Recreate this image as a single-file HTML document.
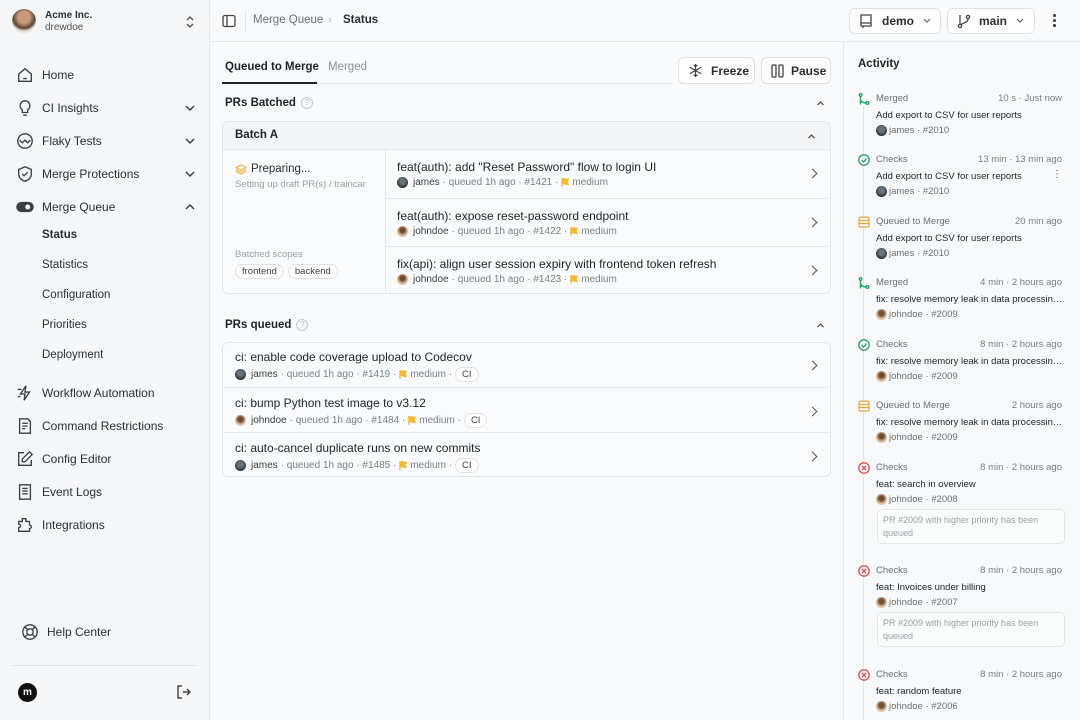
<!DOCTYPE html>
<html><head><meta charset="utf-8"><style>
*{box-sizing:border-box;margin:0;padding:0}
body{width:1080px;height:720px;overflow:hidden;font-family:"Liberation Sans",sans-serif;background:#f9fafb;color:#1f2328;position:relative;font-size:12px}
.abs{position:absolute}
.sb{left:0;top:0;width:210px;height:720px;background:#f6f7f8;border-right:1px solid #e6e8eb}
.nav{position:absolute;left:16px;display:flex;align-items:center;font-size:12px;color:#2b2f33;width:180px}
.nav svg{width:18px;height:18px;margin-right:8px;stroke:#3a3f44;fill:none;stroke-width:1.5}
.nav .ch{position:absolute;right:0;width:12px;height:12px;margin:0}
.sub{position:absolute;left:42px;font-size:11.5px;color:#2b2f33}
.hdr{left:210px;top:0;width:870px;height:42px;border-bottom:1px solid #e6e8eb}
.btn{position:absolute;border:1px solid #dfe2e5;border-radius:6px;background:#fff;display:flex;align-items:center;font-size:12px;font-weight:bold;color:#2b2f33}
.card{position:absolute;background:#fafbfc;border:1px solid #e3e6e9;border-radius:6px;overflow:hidden}
.t{font-size:12px;color:#1f2328}
.m{font-size:10px;color:#7a8087;display:flex;align-items:center;gap:3px;white-space:nowrap}
.m b{color:#3a3f44;font-weight:normal}
.av{width:11px;height:11px;border-radius:50%;display:inline-block;margin-right:2px}
.aj{background:radial-gradient(circle at 50% 40%,#6a737c 30%,#2b3238 70%)}
.ad{background:radial-gradient(circle at 50% 40%,#6b4a2e 25%,#e2c4a6 60%)}
.fl{width:8px;height:9px;display:inline-block;background:#f5b82e;clip-path:polygon(0 0,100% 10%,80% 45%,100% 80%,15% 70%,15% 100%,0 100%)}
.tag{border:1px solid #dfe2e5;border-radius:9px;padding:1px 6px;font-size:9.5px;color:#3a3f44;background:#fff}
.row{position:absolute;left:0;right:0;border-top:1px solid #e6e8eb}
.arr{position:absolute;right:14px;width:7px;height:7px;border-right:1.5px solid #555;border-top:1.5px solid #555;transform:rotate(45deg)}
.act{position:absolute;left:858px;width:208px}
.act .ic{position:absolute;left:0;top:0;width:12px;height:12px}
.act .k{position:absolute;left:18px;top:0;font-size:9.5px;color:#6b7178}
.act .tm{position:absolute;right:4px;top:0;font-size:9.5px;color:#7a8087}
.act .ti{position:absolute;left:18px;top:17px;font-size:9.5px;color:#1f2328;white-space:nowrap;width:190px;overflow:hidden;text-overflow:ellipsis}
.act .u{position:absolute;left:18px;top:32px;font-size:9.5px;color:#6b7178;display:flex;align-items:center}
.act .note{position:absolute;left:19px;top:47px;width:188px;height:35px;border:1px solid #e3e6e9;border-radius:5px;font-size:9px;color:#9aa0a6;padding:4px 5px;line-height:13px;background:#fbfcfc}
.q{display:inline-block;width:12px;height:12px;border:1px solid #c3c7cb;border-radius:50%;font-size:8px;color:#b0b5ba;text-align:center;line-height:10px;font-weight:normal;margin-left:5px;vertical-align:1px}
</style></head><body>
<div class="abs sb"></div>
<div class="abs" style="left:12px;top:9px;width:24px;height:24px;border-radius:50%;background:radial-gradient(circle at 50% 35%,#c99b7c 30%,#5a4334 55%,#e9e4df 70%)"></div>
<div class="abs" style="left:45px;top:10px;font-size:10px;font-weight:bold;color:#2b2f33">Acme Inc.</div>
<div class="abs" style="left:45px;top:22px;font-size:10px;color:#555">drewdoe</div>
<svg class="abs" style="left:184px;top:14px" width="12" height="16" viewBox="0 0 12 16" fill="none" stroke="#555" stroke-width="1.4"><path d="M3 6l3-3 3 3M3 10l3 3 3-3"/></svg>

<div class="nav" style="top:66px"><svg viewBox="0 0 20 20"><path d="M3 9l7-6 7 6v8H3z M8 14h4"/></svg>Home</div>
<div class="nav" style="top:99px"><svg viewBox="0 0 20 20"><path d="M10 2a5.5 5.5 0 0 0-3 10v3h6v-3a5.5 5.5 0 0 0-3-10zM8 18h4"/></svg>CI Insights<svg class="ch" viewBox="0 0 12 12"><path d="M2 4l4 4 4-4"/></svg></div>
<div class="nav" style="top:132px"><svg viewBox="0 0 20 20"><circle cx="10" cy="10" r="8"/><path d="M4 9l3 3 3-3 3 3 3-3"/></svg>Flaky Tests<svg class="ch" viewBox="0 0 12 12"><path d="M2 4l4 4 4-4"/></svg></div>
<div class="nav" style="top:165px"><svg viewBox="0 0 20 20"><path d="M10 2l7 3v5c0 4-3 7-7 8-4-1-7-4-7-8V5z M7 10l2 2 4-4"/></svg>Merge Protections<svg class="ch" viewBox="0 0 12 12"><path d="M2 4l4 4 4-4"/></svg></div>
<div class="nav" style="top:198px"><svg viewBox="0 0 20 20"><rect x="1" y="5" width="18" height="10" rx="5" fill="#3a3f44"/><circle cx="13" cy="10" r="3.5" fill="#fff"/></svg>Merge Queue<svg class="ch" viewBox="0 0 12 12"><path d="M2 8l4-4 4 4"/></svg></div>
<div class="sub" style="top:229px;font-weight:bold">Status</div>
<div class="sub" style="top:259px">Statistics</div>
<div class="sub" style="top:289px">Configuration</div>
<div class="sub" style="top:319px">Priorities</div>
<div class="sub" style="top:349px">Deployment</div>
<div class="nav" style="top:384px"><svg viewBox="0 0 20 20"><path d="M11 2L5 11h5l-1 7 6-9h-5z M2 6h4 M2 14h3"/></svg>Workflow Automation</div>
<div class="nav" style="top:417px"><svg viewBox="0 0 20 20"><path d="M4 2h9l3 3v13H4z M7 7h6M7 10h6M7 13h3"/></svg>Command Restrictions</div>
<div class="nav" style="top:450px"><svg viewBox="0 0 20 20"><path d="M9 3H3v14h14v-6 M15 2l3 3-8 8H7v-3z"/></svg>Config Editor</div>
<div class="nav" style="top:483px"><svg viewBox="0 0 20 20"><path d="M4 2h12v16H4z M7 6h6M7 9h6M7 12h6"/></svg>Event Logs</div>
<div class="nav" style="top:516px"><svg viewBox="0 0 20 20"><path d="M7 3h4v3a2 2 0 1 1 0 0h4v4a2 2 0 1 1 0 4v3H3v-4a2 2 0 1 0 0-4V6h4z"/></svg>Integrations</div>
<div class="nav" style="top:623px;left:21px"><svg viewBox="0 0 20 20"><circle cx="10" cy="10" r="8"/><circle cx="10" cy="10" r="3.5"/><path d="M4 4l3.5 3.5M16 4l-3.5 3.5M4 16l3.5-3.5M16 16l-3.5-3.5"/></svg>Help Center</div>
<div class="abs" style="left:12px;top:665px;width:186px;border-top:1px solid #e3e6e9"></div>
<div class="abs" style="left:18px;top:683px;width:19px;height:19px;border-radius:50%;background:#111;color:#fff;font-size:10px;font-weight:bold;text-align:center;line-height:19px">m</div>
<svg class="abs" style="left:177px;top:685px" width="14" height="14" viewBox="0 0 14 14" fill="none" stroke="#444" stroke-width="1.4"><path d="M5 1H1v12h4 M6 7h7 M10 4l3 3-3 3"/></svg>

<div class="abs hdr"></div>
<svg class="abs" style="left:222px;top:14px" width="14" height="14" viewBox="0 0 14 14" fill="none" stroke="#444" stroke-width="1.3"><rect x="1" y="1.5" width="12" height="11" rx="2"/><path d="M5 1.5v11"/></svg>
<div class="abs" style="left:245px;top:10px;height:22px;border-left:1px solid #e3e6e9"></div>
<div class="abs" style="left:253px;top:14px;font-size:11.5px;color:#6b7178">Merge Queue</div>
<div class="abs" style="left:328px;top:14px;font-size:11px;color:#b0b5ba">›</div>
<div class="abs" style="left:343px;top:14px;font-size:11.5px;font-weight:bold;color:#2b2f33">Status</div>
<div class="btn" style="left:849px;top:8px;width:92px;height:26px;padding-left:9px"><svg width="14" height="15" viewBox="0 0 14 15" fill="none" stroke="#444" stroke-width="1.3"><path d="M2 1h10v11H2z M2 9h10 M4 12v2"/></svg><span style="margin-left:9px">demo</span><svg style="margin-left:8px" width="10" height="8" viewBox="0 0 10 8" fill="none" stroke="#666" stroke-width="1.2"><path d="M2 2l3 3 3-3"/></svg></div>
<div class="btn" style="left:947px;top:8px;width:88px;height:26px;padding-left:9px"><svg width="14" height="15" viewBox="0 0 14 15" fill="none" stroke="#444" stroke-width="1.3"><circle cx="3" cy="12" r="1.6"/><circle cx="11" cy="3" r="1.6"/><path d="M3 1v9 M11 5c0 4-5 3-7 6"/></svg><span style="margin-left:8px">main</span><svg style="margin-left:8px" width="10" height="8" viewBox="0 0 10 8" fill="none" stroke="#666" stroke-width="1.2"><path d="M2 2l3 3 3-3"/></svg></div>
<div class="abs" style="left:1053px;top:14px;width:2px;line-height:4px;font-size:0"><div style="width:2.5px;height:2.5px;background:#444;border-radius:50%;margin-bottom:2.5px"></div><div style="width:2.5px;height:2.5px;background:#444;border-radius:50%;margin-bottom:2.5px"></div><div style="width:2.5px;height:2.5px;background:#444;border-radius:50%"></div></div>

<div class="abs" style="left:843px;top:42px;width:1px;height:678px;background:#e6e8eb"></div>
<div class="abs" style="left:844px;top:42px;width:236px;height:678px;background:#f8f9fa"></div>

<div class="abs" style="left:222px;top:83px;width:450px;border-top:1px solid #e6e8eb"></div>
<div class="abs" style="left:225px;top:61px;font-size:11.5px;font-weight:bold;color:#1f2328">Queued to Merge</div>
<div class="abs" style="left:222px;top:82px;width:95px;height:2px;background:#1f2328"></div>
<div class="abs" style="left:328px;top:61px;font-size:11.5px;color:#8a9097">Merged</div>
<div class="btn" style="left:678px;top:57px;width:77px;height:27px;padding-left:9px"><svg width="15" height="15" viewBox="0 0 16 16" fill="none" stroke="#444" stroke-width="1.3"><path d="M8 1v14M1.9 4.5l12.2 7M1.9 11.5l12.2-7M6 2l2 2 2-2M6 14l2-2 2 2"/></svg><span style="margin-left:8px">Freeze</span></div>
<div class="btn" style="left:761px;top:57px;width:70px;height:27px;padding-left:9px"><svg width="13" height="14" viewBox="0 0 13 14" fill="none" stroke="#444" stroke-width="1.3"><rect x="1" y="1" width="4" height="12" rx="1"/><rect x="8" y="1" width="4" height="12" rx="1"/></svg><span style="margin-left:7px">Pause</span></div>

<div class="abs" style="left:225px;top:97px;font-size:11.5px;font-weight:bold;white-space:nowrap">PRs Batched<span class="q">?</span></div>
<svg class="abs" style="left:815px;top:99px" width="11" height="8" viewBox="0 0 10 8" fill="none" stroke="#555" stroke-width="1.3"><path d="M2 6l3-3 3 3"/></svg>

<div class="card" style="left:222px;top:121px;width:609px;height:173px">
 <div style="height:28px;background:#f4f5f7;border-bottom:1px solid #e6e8eb;padding:7px 12px;font-size:11.5px;font-weight:bold">Batch A</div>
 <svg class="abs" style="left:583px;top:10px" width="11" height="8" viewBox="0 0 10 8" fill="none" stroke="#555" stroke-width="1.3"><path d="M2 6l3-3 3 3"/></svg>
 <div class="abs" style="left:162px;top:28px;bottom:0;border-left:1px solid #e6e8eb"></div>
 <div class="abs" style="left:12px;top:41px;font-size:11.5px;color:#2b2f33;display:flex;align-items:center"><svg width="12" height="11" viewBox="0 0 12 11" fill="none" stroke="#f0b445" stroke-width="1.1" style="margin-right:4px"><path d="M6 1l5 2.5-5 2.5-5-2.5z M1 5.5l5 2.5 5-2.5 M1 7.5l5 2.5 5-2.5"/></svg>Preparing...</div>
 <div class="abs" style="left:12px;top:57px;font-size:9.5px;color:#9aa0a6">Setting up draft PR(s) / traincar</div>
 <div class="abs" style="left:12px;top:127px;font-size:9.5px;color:#9aa0a6">Batched scopes</div>
 <div class="abs" style="left:12px;top:142px;display:flex;gap:4px"><span class="tag">frontend</span><span class="tag">backend</span></div>
 <div class="abs" style="left:162px;right:0;top:28px;height:145px">
  <div class="row" style="top:0;border-top:none;height:48px"><div class="abs t" style="left:12px;top:10px">feat(auth): add "Reset Password" flow to login UI</div><div class="abs m" style="left:12px;top:27px"><span class="av aj"></span><b>james</b> · queued 1h ago · #1421 · <span class="fl"></span> medium</div><div class="arr" style="top:20px"></div></div>
  <div class="row" style="top:48px;height:48px"><div class="abs t" style="left:12px;top:10px">feat(auth): expose reset-password endpoint</div><div class="abs m" style="left:12px;top:27px"><span class="av ad"></span><b>johndoe</b> · queued 1h ago · #1422 · <span class="fl"></span> medium</div><div class="arr" style="top:20px"></div></div>
  <div class="row" style="top:96px;height:49px"><div class="abs t" style="left:12px;top:10px">fix(api): align user session expiry with frontend token refresh</div><div class="abs m" style="left:12px;top:27px"><span class="av ad"></span><b>johndoe</b> · queued 1h ago · #1423 · <span class="fl"></span> medium</div><div class="arr" style="top:20px"></div></div>
 </div>
</div>

<div class="abs" style="left:225px;top:319px;font-size:11.5px;font-weight:bold;white-space:nowrap">PRs queued<span class="q">?</span></div>
<svg class="abs" style="left:815px;top:321px" width="11" height="8" viewBox="0 0 10 8" fill="none" stroke="#555" stroke-width="1.3"><path d="M2 6l3-3 3 3"/></svg>

<div class="card" style="left:222px;top:342px;width:609px;height:135px">
  <div class="row" style="top:0;border-top:none;height:45px"><div class="abs t" style="left:12px;top:7px">ci: enable code coverage upload to Codecov</div><div class="abs m" style="left:12px;top:24px"><span class="av aj"></span><b>james</b> · queued 1h ago · #1419 · <span class="fl"></span> medium · <span class="tag">CI</span></div><div class="arr" style="top:19px"></div></div>
  <div class="row" style="top:44px;height:45px"><div class="abs t" style="left:12px;top:8px">ci: bump Python test image to v3.12</div><div class="abs m" style="left:12px;top:25px"><span class="av ad"></span><b>johndoe</b> · queued 1h ago · #1484 · <span class="fl"></span> medium · <span class="tag">CI</span></div><div class="arr" style="top:20px"></div></div>
  <div class="row" style="top:89px;height:46px"><div class="abs t" style="left:12px;top:8px">ci: auto-cancel duplicate runs on new commits</div><div class="abs m" style="left:12px;top:25px"><span class="av aj"></span><b>james</b> · queued 1h ago · #1485 · <span class="fl"></span> medium · <span class="tag">CI</span></div><div class="arr" style="top:20px"></div></div>
</div>

<div class="abs" style="left:858px;top:58px;font-size:11.5px;font-weight:bold">Activity</div>
<div class="abs" style="left:863px;top:106px;width:1px;height:614px;background:#e3e6e9"></div>

<div class="act" style="top:93px"><svg class="ic" viewBox="0 0 12 12" fill="none" stroke="#2a9d6a" stroke-width="1.4"><circle cx="2.5" cy="2" r="1.3"/><circle cx="9.5" cy="10" r="1.3"/><path d="M2.5 3.5v8 M2.5 6c0 3 4 4 5.5 4"/></svg><div class="k">Merged</div><div class="tm">10 s · Just now</div><div class="ti">Add export to CSV for user reports</div><div class="u"><span class="av aj"></span>james · #2010</div></div>
<div class="act" style="top:154px"><svg class="ic" viewBox="0 0 12 12" fill="none" stroke="#2a9d6a" stroke-width="1.3"><circle cx="6" cy="6" r="5.2" fill="#f8f9fa"/><path d="M3.5 6l2 2 3-3.5"/></svg><div class="k">Checks</div><div class="tm">13 min · 13 min ago</div><div class="ti">Add export to CSV for user reports</div><div class="abs" style="right:4px;top:15px;font-size:10px;color:#444">⋮</div><div class="u"><span class="av aj"></span>james · #2010</div></div>
<div class="act" style="top:216px"><svg class="ic" viewBox="0 0 12 12" fill="#f8f9fa" stroke="#e9a83a" stroke-width="1.3"><rect x="1" y="1" width="10" height="10" rx="1.5"/><path d="M1 4.5h10M1 7.5h10"/></svg><div class="k">Queued to Merge</div><div class="tm">20 min ago</div><div class="ti">Add export to CSV for user reports</div><div class="u"><span class="av aj"></span>james · #2010</div></div>
<div class="act" style="top:277px"><svg class="ic" viewBox="0 0 12 12" fill="none" stroke="#2a9d6a" stroke-width="1.4"><circle cx="2.5" cy="2" r="1.3"/><circle cx="9.5" cy="10" r="1.3"/><path d="M2.5 3.5v8 M2.5 6c0 3 4 4 5.5 4"/></svg><div class="k">Merged</div><div class="tm">4 min · 2 hours ago</div><div class="ti">fix: resolve memory leak in data processing pipeline</div><div class="u"><span class="av ad"></span>johndoe · #2009</div></div>
<div class="act" style="top:339px"><svg class="ic" viewBox="0 0 12 12" fill="none" stroke="#2a9d6a" stroke-width="1.3"><circle cx="6" cy="6" r="5.2" fill="#f8f9fa"/><path d="M3.5 6l2 2 3-3.5"/></svg><div class="k">Checks</div><div class="tm">8 min · 2 hours ago</div><div class="ti">fix: resolve memory leak in data processing pipeline</div><div class="u"><span class="av ad"></span>johndoe · #2009</div></div>
<div class="act" style="top:400px"><svg class="ic" viewBox="0 0 12 12" fill="#f8f9fa" stroke="#e9a83a" stroke-width="1.3"><rect x="1" y="1" width="10" height="10" rx="1.5"/><path d="M1 4.5h10M1 7.5h10"/></svg><div class="k">Queued to Merge</div><div class="tm">2 hours ago</div><div class="ti">fix: resolve memory leak in data processing pipeline</div><div class="u"><span class="av ad"></span>johndoe · #2009</div></div>
<div class="act" style="top:462px"><svg class="ic" viewBox="0 0 12 12" fill="none" stroke="#d9534f" stroke-width="1.3"><circle cx="6" cy="6" r="5.2" fill="#f8f9fa"/><path d="M4 4l4 4M8 4l-4 4"/></svg><div class="k">Checks</div><div class="tm">8 min · 2 hours ago</div><div class="ti">feat: search in overview</div><div class="u"><span class="av ad"></span>johndoe · #2008</div><div class="note">PR #2009 with higher priority has been queued</div></div>
<div class="act" style="top:565px"><svg class="ic" viewBox="0 0 12 12" fill="none" stroke="#d9534f" stroke-width="1.3"><circle cx="6" cy="6" r="5.2" fill="#f8f9fa"/><path d="M4 4l4 4M8 4l-4 4"/></svg><div class="k">Checks</div><div class="tm">8 min · 2 hours ago</div><div class="ti">feat: Invoices under billing</div><div class="u"><span class="av ad"></span>johndoe · #2007</div><div class="note">PR #2009 with higher priority has been queued</div></div>
<div class="act" style="top:669px"><svg class="ic" viewBox="0 0 12 12" fill="none" stroke="#d9534f" stroke-width="1.3"><circle cx="6" cy="6" r="5.2" fill="#f8f9fa"/><path d="M4 4l4 4M8 4l-4 4"/></svg><div class="k">Checks</div><div class="tm">8 min · 2 hours ago</div><div class="ti">feat: random feature</div><div class="u"><span class="av ad"></span>johndoe · #2006</div></div>
</body></html>
